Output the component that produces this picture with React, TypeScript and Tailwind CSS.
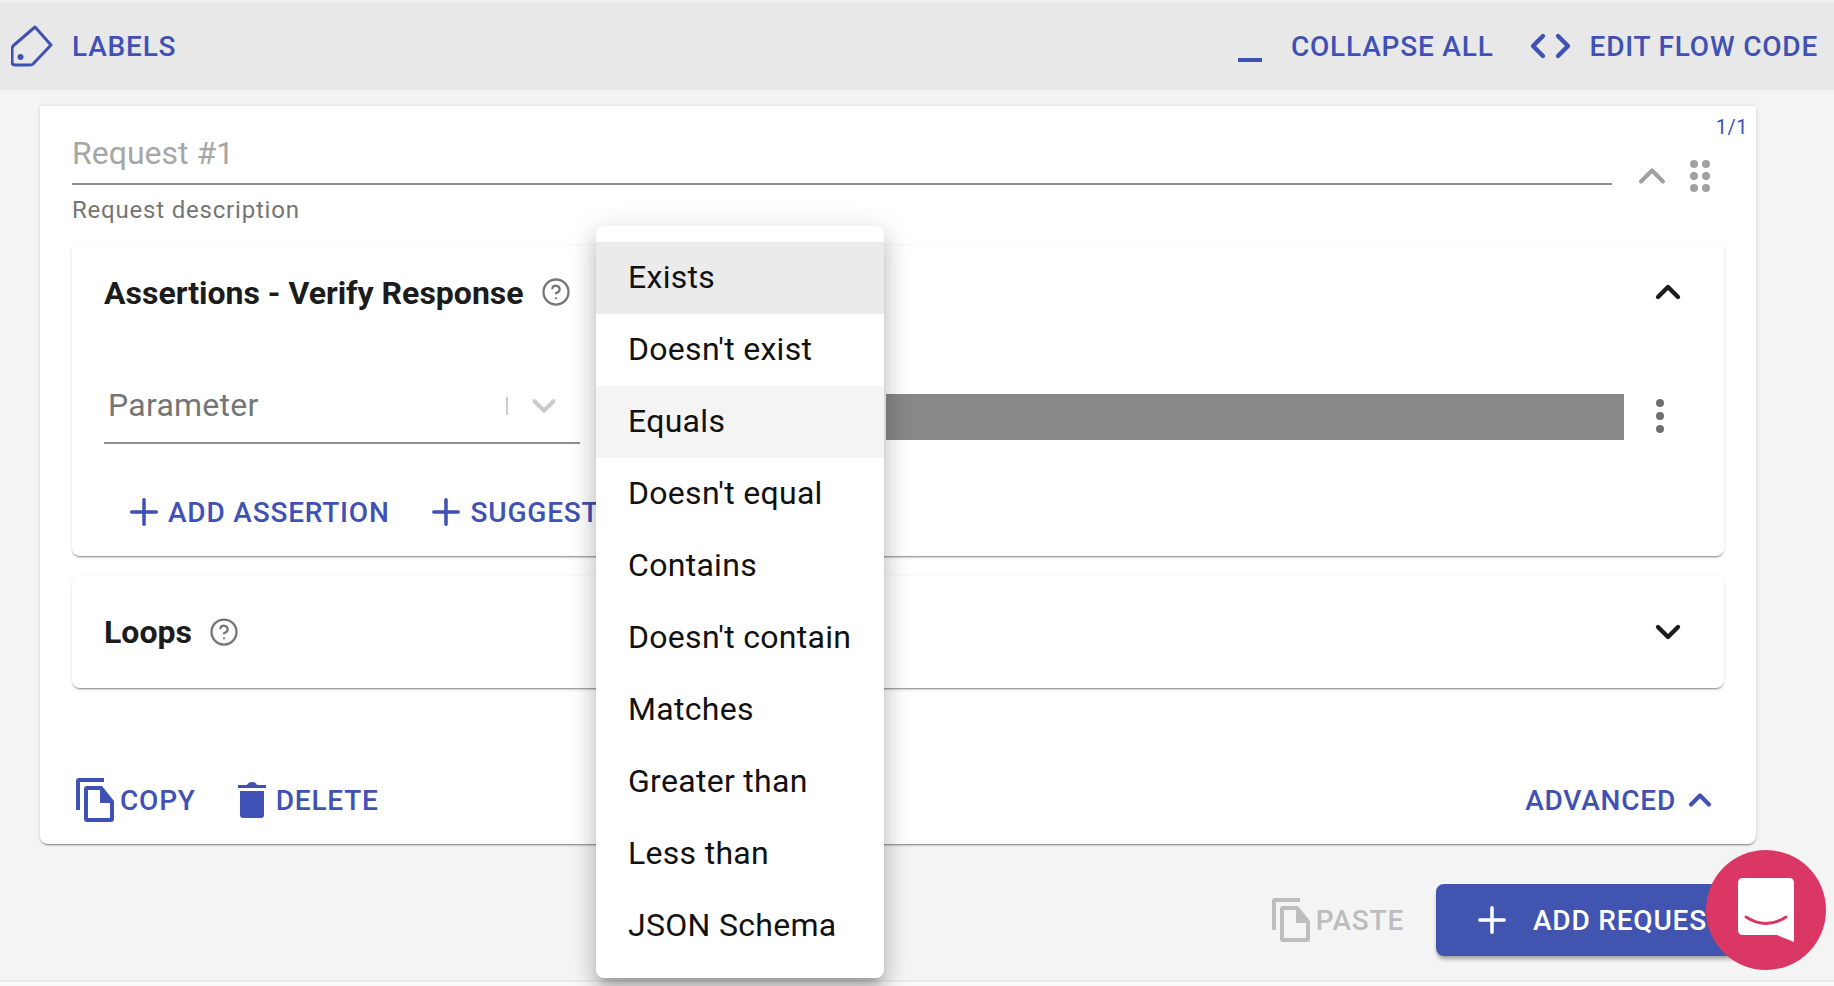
import { ChevronLeft, ChevronRight, Plus, ChevronDown, ChevronUp, HelpCircle } from "lucide-react";

const menuItems = [
  "Exists",
  "Doesn't exist",
  "Equals",
  "Doesn't equal",
  "Contains",
  "Doesn't contain",
  "Matches",
  "Greater than",
  "Less than",
  "JSON Schema",
];

const btnText =
  "pt-[2px] text-[28px] leading-none font-medium tracking-[0.8px] uppercase text-[#3f51b5]";

const panelShadow =
  "shadow-[0_2px_2px_-1px_rgba(0,0,0,0.45),0_1px_5px_0_rgba(0,0,0,0.08)]";

const TagIcon = () => (
  <svg width="42" height="42" viewBox="0 0 42 42" fill="none" className="text-[#3f51b5]">
    <path
      d="M24 2 L40 20 L22 39 Q21 40 19 40 L4 40 Q1 40 1 37 L1 24 Q1 22 2.5 20.5 Z"
      stroke="currentColor"
      strokeWidth="3"
      strokeLinejoin="round"
    />
    <circle cx="9.5" cy="32" r="3" fill="currentColor" />
  </svg>
);

const CopyIcon = ({ color }: { color: string }) => (
  <svg width="38" height="44" viewBox="0 0 38 44" fill={color}>
    <path d="M3 0 H28 V4 H4 V32 H0 V3 Q0 0 3 0 Z" />
    <path
      fillRule="evenodd"
      d="M11 8 H26 L38 23 V41 Q38 44 35 44 H11 Q8 44 8 41 V11 Q8 8 11 8 Z M12 12 V40 H34 V25 H24 V12 Z"
    />
  </svg>
);

const TrashIcon = () => (
  <svg width="28" height="36" viewBox="0 0 28 36" fill="#3f51b5">
    <path d="M0 3 H9 Q10 0 14 0 Q18 0 19 3 H28 V6 H0 Z" />
    <path d="M2 9 H26 V33 Q26 36 23 36 H5 Q2 36 2 33 Z" />
  </svg>
);

const DragDots = () => (
  <svg width="20" height="32" viewBox="0 0 20 32" fill="#a0a0a0">
    <circle cx="4" cy="4" r="4" />
    <circle cx="16" cy="4" r="4" />
    <circle cx="4" cy="16" r="4" />
    <circle cx="16" cy="16" r="4" />
    <circle cx="4" cy="28" r="4" />
    <circle cx="16" cy="28" r="4" />
  </svg>
);

const ChatBubble = () => (
  <svg width="56" height="64" viewBox="0 0 56 64">
    <path
      d="M5 0 H51 Q56 0 56 5 V64 L39 57 H5 Q0 57 0 52 V5 Q0 0 5 0 Z"
      fill="#fff"
    />
    <path
      d="M8 39 Q28 52 48 39"
      fill="none"
      stroke="#db3764"
      strokeWidth="3"
      strokeLinecap="round"
    />
  </svg>
);

export default function App() {
  return (
    <div className="relative h-[986px] overflow-hidden bg-[#f4f4f4] font-['Roboto',sans-serif]">
      <div className="mt-[2px] flex h-[88px] items-center bg-[#e8e8e8] pl-[11px] pr-[16px]">
        <TagIcon />
        <span className={`ml-[19px] ${btnText}`}>Labels</span>
        <div className="ml-auto flex items-center">
          <div className="mt-[28px] h-[4px] w-[24px] bg-[#3f51b5]" />
          <span className={`ml-[29px] ${btnText}`}>Collapse all</span>
          <div className="ml-[24px] flex items-center">
            <ChevronLeft size={40} strokeWidth={2.6} className="-mr-[15px] text-[#3f51b5]" />
            <ChevronRight size={40} strokeWidth={2.6} className="text-[#3f51b5]" />
          </div>
          <span className={`ml-[7px] ${btnText}`}>Edit flow code</span>
        </div>
      </div>

      {/* request card */}
      <div className="relative mt-[16px] ml-[40px] h-[738px] w-[1716px] rounded-b-[8px] bg-white px-[32px] shadow-[0_2px_2px_-1px_rgba(0,0,0,0.45),0_0_4px_0_rgba(0,0,0,0.12)]">
        <span className="absolute top-[9px] right-[8px] text-[20px] leading-[24px] tracking-[0.5px] text-[#3f51b5]">
          1/1
        </span>
        <div className="flex h-[79px] items-start">
          <div className="flex h-[79px] w-[1540px] items-end border-b-2 border-[#919191] pb-[6px]">
            <span className="text-[32px] leading-[48px] text-[#a6a6a6]">Request #1</span>
          </div>
          <ChevronUp size={44} strokeWidth={2.2} className="mt-[48px] ml-[18px] text-[#a0a0a0]" />
          <div className="mt-[54px] ml-[16px]">
            <DragDots />
          </div>
        </div>
        <div className="mt-[11px] h-[28px] text-[24px] leading-[28px] tracking-[0.8px] text-[#757575]">
          Request description
        </div>

        <div className={`mt-[22px] h-[310px] w-[1652px] rounded-b-[8px] bg-white ${panelShadow}`}>
          <div className="flex h-[94px] items-center pl-[32px] pr-[36px]">
            <span className="text-[32px] font-bold leading-none text-[#1c1c1c]">
              Assertions - Verify Response
            </span>
            <HelpCircle size={30} strokeWidth={1.8} className="mb-[2px] ml-[17px] text-[#757575]" />
            <ChevronUp size={40} strokeWidth={2.6} className="mb-[2px] ml-auto text-[#1c1c1c]" />
          </div>
          <div className="mt-[30px] flex h-[74px] items-start pl-[32px]">
            <div className="flex h-[74px] w-[476px] items-center border-b-2 border-[#919191] pb-[3px] pl-[4px] pr-[17px]">
              <span className="text-[32px] leading-none tracking-[0.25px] text-[#757575]">Parameter</span>
              <div className="mt-[2px] ml-auto h-[18px] w-[2px] bg-[#cccccc]" />
              <ChevronDown size={38} strokeWidth={2.6} className="mt-[2px] ml-[17px] text-[#cccccc]" />
            </div>
            <div className="mt-[24px] ml-[306px] h-[46px] w-[738px] bg-[#888888]" />
            <div className="mt-[29px] ml-[32px] flex flex-col gap-[5px]">
              <div className="size-[8px] rounded-full bg-[#6f6f6f]" />
              <div className="size-[8px] rounded-full bg-[#6f6f6f]" />
              <div className="size-[8px] rounded-full bg-[#6f6f6f]" />
            </div>
          </div>
          <div className="mt-[47px] flex items-center pl-[51px]">
            <Plus size={42} strokeWidth={2} className="text-[#3f51b5]" />
            <span className={`ml-[3px] ${btnText}`}>Add assertion</span>
            <Plus size={42} strokeWidth={2} className="ml-[35px] text-[#3f51b5]" />
            <span className={`ml-[4px] ${btnText}`}>Suggest</span>
          </div>
        </div>

        <div className={`mt-[20px] flex h-[112px] w-[1652px] items-center rounded-[8px] bg-white pl-[32px] pr-[36px] ${panelShadow}`}>
          <span className="text-[32px] font-bold leading-none text-[#1c1c1c]">Loops</span>
          <HelpCircle size={30} strokeWidth={1.8} className="ml-[17px] text-[#757575]" />
          <ChevronDown size={40} strokeWidth={2.6} className="ml-auto text-[#1c1c1c]" />
        </div>

        <div className="mt-[90px] flex items-center pl-[4px] pr-[6px]">
          <CopyIcon color="#3f51b5" />
          <span className={`ml-[6px] ${btnText}`}>Copy</span>
          <div className="ml-[42px]">
            <TrashIcon />
          </div>
          <span className={`ml-[10px] ${btnText}`}>Delete</span>
          <span className={`ml-auto ${btnText}`}>Advanced</span>
          <ChevronUp size={36} strokeWidth={2.8} className="ml-[6px] text-[#3f51b5]" />
        </div>
      </div>

      <div className="mt-[40px] flex items-center justify-end pr-[78px]">
        <CopyIcon color="#bdbdbd" />
        <span className="ml-[6px] pt-[2px] text-[28px] leading-none font-medium tracking-[0.8px] uppercase text-[#bdbdbd]">
          Paste
        </span>
        <div className="ml-[32px] flex h-[72px] w-[320px] items-center rounded-[8px] bg-[#4154af] pl-[35px] shadow-[0_4px_4px_-1px_rgba(0,0,0,0.35)]">
          <Plus size={42} strokeWidth={2} className="text-white" />
          <span className="ml-[20px] pt-[2px] text-[28px] leading-none font-medium tracking-[0.8px] uppercase text-white">
            Add request
          </span>
        </div>
      </div>

      <div className="absolute right-0 bottom-0 left-0 h-[6px] border-t-2 border-[#ebebeb] bg-[#f9f9f9]" />

      {/* open select menu */}
      <div className="absolute top-[226px] left-[596px] w-[288px] rounded-[8px] bg-white py-[16px] shadow-[0_10px_10px_-6px_rgba(0,0,0,0.2),0_16px_20px_2px_rgba(0,0,0,0.14),0_6px_28px_4px_rgba(0,0,0,0.12)]">
        {menuItems.map((item, i) => (
          <div
            key={item}
            className={`flex h-[72px] items-center pb-[2px] pl-[32px] text-[32px] leading-none tracking-[0.3px] text-[#111111] ${
              i === 0 ? "bg-[#ebebeb]" : i === 2 ? "bg-[#f4f4f4]" : ""
            }`}
          >
            {item}
          </div>
        ))}
      </div>

      {/* chat launcher */}
      <div className="absolute top-[850px] left-[1706px] flex size-[120px] items-center justify-center rounded-full bg-[#db3764]">
        <ChatBubble />
      </div>
    </div>
  );
}
